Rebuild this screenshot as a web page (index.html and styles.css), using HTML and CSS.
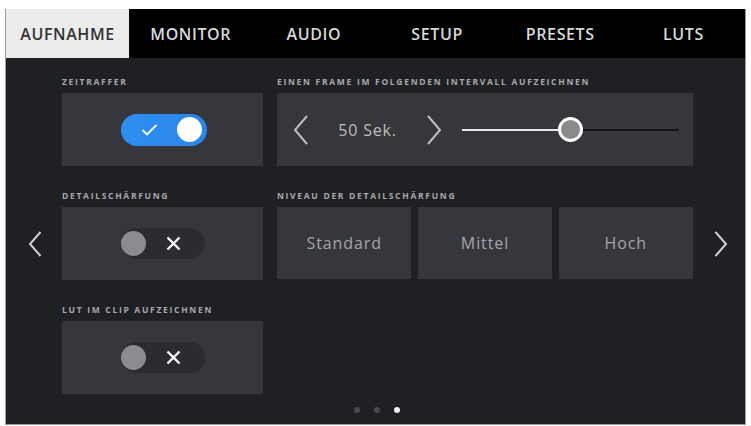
FILE: index.html
```html
<!DOCTYPE html>
<html lang="de">
<head>
<meta charset="utf-8">
<title>Aufnahme</title>
<link rel="stylesheet" href="styles.css">
</head>
<body>
<div class="screen">
  <nav class="tabs">
    <div class="tab active">AUFNAHME</div>
    <div class="tab">MONITOR</div>
    <div class="tab">AUDIO</div>
    <div class="tab">SETUP</div>
    <div class="tab">PRESETS</div>
    <div class="tab">LUTS</div>
  </nav>
  <main class="content">
    <div class="grid">
      <section class="field">
        <div class="label">ZEITRAFFER</div>
        <div class="card center">
          <div class="toggle on">
            <svg class="check" width="17" height="14" viewBox="0 0 17 14"><path d="M1.5 7 L6 11.5 L15.5 2" fill="none" stroke="#fff" stroke-width="1.8"/></svg>
            <span class="knob"></span>
          </div>
        </div>
      </section>
      <section class="field">
        <div class="label">EINEN FRAME IM FOLGENDEN INTERVALL AUFZEICHNEN</div>
        <div class="card slider-card">
          <svg class="arrow" width="16" height="30" viewBox="0 0 16 30"><path d="M14 1 L2 15 L14 29" fill="none" stroke="#bdbdbd" stroke-width="2"/></svg>
          <span class="value">50 Sek.</span>
          <svg class="arrow" width="16" height="30" viewBox="0 0 16 30"><path d="M2 1 L14 15 L2 29" fill="none" stroke="#bdbdbd" stroke-width="2"/></svg>
          <div class="slider">
            <div class="fill" style="width: 50%"></div>
            <span class="thumb" style="left: 50%"></span>
          </div>
        </div>
      </section>
      <section class="field">
        <div class="label">DETAILSCHÄRFUNG</div>
        <div class="card center">
          <div class="toggle off">
            <span class="knob"></span>
            <svg class="cross" width="15" height="15" viewBox="0 0 15 15"><path d="M1.5 1.5 L13.5 13.5 M13.5 1.5 L1.5 13.5" fill="none" stroke="#fff" stroke-width="2.4"/></svg>
          </div>
        </div>
      </section>
      <section class="field">
        <div class="label">NIVEAU DER DETAILSCHÄRFUNG</div>
        <div class="levels">
          <div class="card level">Standard</div>
          <div class="card level">Mittel</div>
          <div class="card level">Hoch</div>
        </div>
      </section>
      <section class="field">
        <div class="label">LUT IM CLIP AUFZEICHNEN</div>
        <div class="card center">
          <div class="toggle off">
            <span class="knob"></span>
            <svg class="cross" width="15" height="15" viewBox="0 0 15 15"><path d="M1.5 1.5 L13.5 13.5 M13.5 1.5 L1.5 13.5" fill="none" stroke="#fff" stroke-width="2.4"/></svg>
          </div>
        </div>
      </section>
    </div>
    <div class="dots">
      <span class="dot"></span>
      <span class="dot"></span>
      <span class="dot current"></span>
    </div>
    <svg class="page-arrow prev" width="14" height="26" viewBox="0 0 14 26"><path d="M12.5 1 L2 13 L12.5 25" fill="none" stroke="#cfcfcf" stroke-width="2"/></svg>
    <svg class="page-arrow next" width="14" height="26" viewBox="0 0 14 26"><path d="M1.5 1 L12 13 L1.5 25" fill="none" stroke="#cfcfcf" stroke-width="2"/></svg>
  </main>
</div>
</body>
</html>
```
FILE: styles.css
```css
* { box-sizing: border-box; }
html, body { margin: 0; padding: 0; background: #ffffff; }
body { font-family: "Open Sans", "Liberation Sans", sans-serif; }

.screen {
  width: 741px;
  height: 416px;
  margin: 9px 0 0 5px;
  background: #1f2024;
  border: 1px solid #9a9a9a;
  border-top: 0;
  display: flex;
  flex-direction: column;
  overflow: hidden;
}

.tabs {
  height: 49px;
  background: #000;
  display: grid;
  grid-template-columns: repeat(6, 1fr);
}
.tab {
  display: flex;
  align-items: center;
  justify-content: center;
  color: #d8d8d8;
  font-size: 16px;
  font-weight: 600;
  letter-spacing: 0.6px;
}
.tab.active {
  background: #ececec;
  color: #333;
}

.content {
  position: relative;
  flex: 1;
  display: flex;
  flex-direction: column;
  padding: 19px 53px 0 56px;
}

.grid {
  display: grid;
  grid-template-columns: 201px 416px;
  column-gap: 14px;
  row-gap: 25px;
}

.label {
  height: 10px;
  line-height: 10px;
  font-size: 8.5px;
  font-weight: 700;
  letter-spacing: 1.7px;
  color: #a9a9ad;
  margin-bottom: 6px;
  white-space: nowrap;
}

.card {
  background: #36373c;
  height: 73px;
}
.center {
  display: flex;
  align-items: center;
  justify-content: center;
}

.toggle {
  width: 86px;
  height: 32px;
  border-radius: 16px;
  display: flex;
  align-items: center;
  position: relative;
}
.toggle.on {
  background: linear-gradient(90deg, #2f8ef2, #2a86ea);
  justify-content: space-between;
  padding: 0 5px 0 20px;
  margin-left: 2px;
}
.toggle.on .check { display: block; }
.toggle.on .knob {
  width: 25px;
  height: 25px;
  border-radius: 50%;
  background: #fff;
}
.toggle.off {
  width: 84px;
  height: 31px;
  background: #2b2c30;
  gap: 20px;
}
.toggle.off .knob {
  width: 25px;
  height: 25px;
  border-radius: 50%;
  background: #8c8c90;
}

.slider-card {
  display: flex;
  align-items: center;
  padding-left: 16px;
}
.slider-card .arrow { display: block; }
.value {
  color: #bdbdbd;
  font-size: 16px;
  letter-spacing: 0.8px;
  width: 117px;
  text-align: center;
}
.slider {
  position: relative;
  margin-left: 20px;
  width: 217px;
  height: 2px;
  background: #141416;
}
.slider .fill {
  height: 2px;
  background: #e8e8e8;
}
.slider .thumb {
  position: absolute;
  top: 50%;
  width: 25px;
  height: 25px;
  margin: -12.5px 0 0 -12.5px;
  border-radius: 50%;
  border: 3px solid #fff;
  background: #8a8a8d;
}

.levels {
  display: grid;
  grid-template-columns: repeat(3, 1fr);
  column-gap: 6.5px;
}
.level {
  height: 72px;
  display: flex;
  align-items: center;
  justify-content: center;
  color: #a5a5a8;
  font-size: 16px;
  letter-spacing: 0.9px;
}

.dots {
  margin-top: auto;
  margin-bottom: 11px;
  display: flex;
  justify-content: center;
  gap: 14px;
  padding-right: 1px;
}
.dot {
  width: 6px;
  height: 6px;
  border-radius: 50%;
  background: #4a4b50;
}
.dot.current { background: #f2f2f2; }

.page-arrow {
  position: absolute;
  top: 173px;
}
.page-arrow.prev { left: 22px; }
.page-arrow.next { right: 17px; }
```
